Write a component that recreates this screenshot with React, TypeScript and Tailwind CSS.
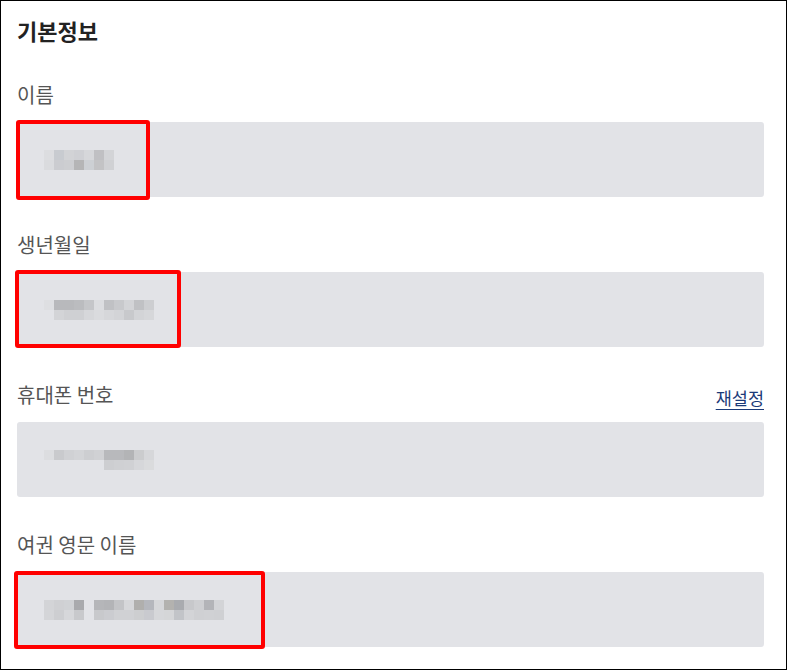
import React from "react"

// pixelated (blurred) values, two rows of 10px cells; null = empty
type Cell = string | null

interface Field {
    label: string
    top: Cell[]
    bottom: Cell[]
    mark?: { left: number; top: number; width: number; height: number }
    link?: string
}

const fields: Field[] = [
    {
        label: "이름",
        top: ["#dcdde0", "#c8cbd0", "#d2d3d6", "#cfd0d4", "#d6d7da", "#c0c0c3", "#d3d4d7"],
        bottom: ["#dadbde", "#cbccd0", "#cdced1", "#b5b5b6", "#cdd0d4", "#c3c3c5", "#d0d1d4"],
        mark: { left: -1, top: -2, width: 134, height: 80 },
    },
    {
        label: "생년월일",
        top: ["#dedfe2", "#b8b9bc", "#b8b9bc", "#bbbcbf", "#c5c6c9", "#dcdde0", "#c0c1c4", "#c8c9cc", "#d3d4d7", "#c0c1c4", "#cdced1"],
        bottom: [null, "#d3d4d7", "#cfd0d3", "#cfd0d3", "#d6d7da", "#dadbde", "#d6d7da", "#d3d4d7", "#c8c9cc", "#d3d4d7", "#d6d7da"],
        mark: { left: -2, top: -2, width: 166, height: 78 },
    },
    {
        label: "휴대폰 번호",
        top: ["#dcdde0", "#c9cacd", "#d0d1d4", "#d3d4d7", "#cdced1", "#d0d1d4", "#b8b9bc", "#b8b9bc", "#b3b4b6", "#cbccce", "#d6d7da"],
        bottom: [null, null, null, null, null, null, "#cdced1", "#cfd0d3", "#d0d1d4", "#d6d7da", "#dadbdd"],
        link: "재설정",
    },
    {
        label: "여권 영문 이름",
        top: ["#d3d4d7", "#cfd0d3", "#d0d2d5", "#a9aaad", null, "#b5b6b9", "#b3b4b7", "#c3c4c7", "#d6d7da", "#b0afad", "#b5b7bd", "#d6d7da", "#b3b2af", "#a9abaf", "#c7c8cb", "#cecfd2", "#b3b4b8", "#d3d4d7"],
        bottom: ["#d4d5d8", "#cdced1", "#d6d7da", "#c8c9cc", null, "#c8c9cc", "#cbccd0", "#d0d1d4", "#d0d1d4", "#cdced0", "#c9cacf", "#d6d7da", "#d5d6d8", "#c2c4c8", "#d3d4d7", "#cfd0d3", "#d0d1d4", "#cfd0d3"],
        mark: { left: -3, top: -1, width: 251, height: 78 },
    },
]

function Mosaic({ top, bottom }: { top: Cell[]; bottom: Cell[] }) {
    return (
        <svg width={top.length * 10} height={20} className="block">
            {top.map((c, i) => c && <rect key={"t" + i} x={i * 10} y={0} width={10} height={10} fill={c} />)}
            {bottom.map((c, i) => c && <rect key={"b" + i} x={i * 10} y={10} width={10} height={10} fill={c} />)}
        </svg>
    )
}

export default function App() {
    return (
        <div
            className="w-[787px] h-[670px] border border-black bg-white pl-4 pr-[22px] pt-[15px]"
            style={{ fontFamily: '"Noto Sans CJK KR", "Noto Sans", sans-serif' }}
        >
            <h2 className="text-[22px] leading-[28px] font-bold text-[#222222]">기본정보</h2>
            <div className="mt-[38px] flex flex-col gap-[35px]">
                {fields.map((f) => (
                    <div key={f.label}>
                        <div className="flex items-center justify-between h-[26px] mb-[14px]">
                            <span className="text-[20px] text-[#555555]">{f.label}</span>
                            {f.link && (
                                <a href="#" className="mt-[6px] text-[17.5px] text-[#1b3a78] underline underline-offset-4">
                                    {f.link}
                                </a>
                            )}
                        </div>
                        <div className="relative h-[75px] rounded-[3px] bg-[#e2e3e7] flex items-center pl-[27px]">
                            <Mosaic top={f.top} bottom={f.bottom} />
                            {f.mark && (
                                <div
                                    className="absolute border-4 border-[#ff0000] rounded-[3px]"
                                    style={{ left: f.mark.left, top: f.mark.top, width: f.mark.width, height: f.mark.height }}
                                />
                            )}
                        </div>
                    </div>
                ))}
            </div>
        </div>
    )
}
